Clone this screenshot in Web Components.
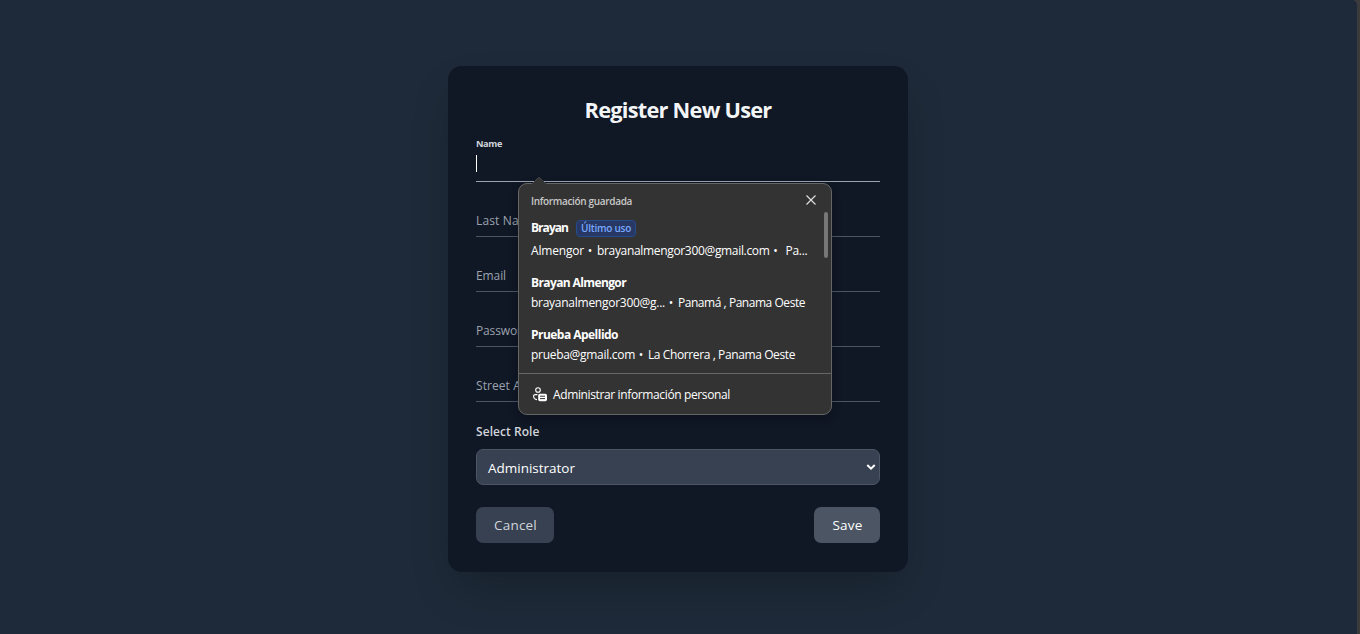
<!DOCTYPE html>
<html lang="es">
<head>
<meta charset="utf-8">
<title>Register New User</title>
<style>
html,body{margin:0;height:100%;overflow:hidden;background:#3b3b3b}
body{font-family:"Open Sans","Noto Sans",sans-serif;color:#fff}
</style>
</head>
<body>
<register-page></register-page>
<script>
const define = (name, html, setup) => customElements.define(name, class extends HTMLElement {
  connectedCallback() {
    if (this.shadowRoot) return;
    const t = document.createElement('template');
    t.innerHTML = html;
    this.attachShadow({mode: 'open'}).append(t.content.cloneNode(true));
    if (setup) setup(this, this.shadowRoot);
  }
});

// A single line of text whose tracking is adjusted to fill the width in "w".
define('fit-text', `<style>
:host{display:inline-block;white-space:pre;flex:none}
span{display:inline-block}
</style><span><slot></slot></span>`, (el, root) => {
  const s = root.querySelector('span'), w = +el.getAttribute('w');
  const nat = s.getBoundingClientRect().width, n = el.textContent.length;
  if (w) { s.style.letterSpacing = ((w - nat) / n) + 'px'; el.style.width = w + 'px'; }
});

define('form-field', `<style>
:host{display:flex;align-items:flex-end;height:54px;border-bottom:1px solid #4b5563;box-sizing:content-box}
:host([active]){border-color:#9ca3af;height:45px;flex-direction:column;align-items:flex-start;justify-content:flex-start}
div{font-size:12px;line-height:18px;height:18px;color:#9ca3af;padding-bottom:6px}
:host([active]) div{font-size:9.2px;font-weight:700;line-height:14px;height:14px;padding:1px 0 0;color:#d1d5db}
i{display:none;width:1px;height:17px;background:#fff;margin-top:4px}
:host([active]) i{display:block}
</style><div><slot></slot></div><i></i>`);

define('role-select', `<style>
:host{display:flex;align-items:center;justify-content:space-between;box-sizing:border-box;height:36px;border:1px solid #4b5563;border-radius:7px;background:#374151;padding:0 3px 0 11px;font-size:13.5px;line-height:20px;color:#fff}
svg{display:block}
div{padding-top:2px}
</style><div><slot></slot></div><svg width="10" height="8" viewBox="0 0 10 8"><path d="M1.3 2 5 5.7 8.7 2" fill="none" stroke="#fff" stroke-width="2"/></svg>`);

define('form-button', `<style>
:host{display:flex;align-items:center;justify-content:center;box-sizing:border-box;height:36px;width:78px;border-radius:7px;background:#374151;color:#d1d5db;font-size:13.5px;line-height:20px;padding-left:1px}
:host([primary]){width:66px;background:#4b5563;color:#fff}
</style><slot></slot>`);

define('saved-entry', `<style>
:host{display:block;height:52px;font-size:12px;line-height:20px;color:#fff}
:host([recent]){height:56px}
.n{display:flex;align-items:center;height:20px;font-weight:700;gap:8px}
:host([recent]) .n{height:22px;margin-bottom:2px}
.d{display:flex;height:20px;font-weight:500}
</style><div class="n"><slot name="name"></slot><slot name="badge"></slot></div><div class="d"><slot></slot></div>`);

define('use-badge', `<style>
:host{display:flex;align-items:center;justify-content:center;box-sizing:border-box;width:60px;height:17px;border:1px solid #264a8d;border-radius:4px;background:#263863;color:#7aa7ff;font-size:10px;line-height:14px;font-weight:600}
</style><slot></slot>`);

define('autofill-popup', `<style>
:host{display:flex;flex-direction:column;box-sizing:border-box;width:314px;height:232px;border:1px solid #666;border-radius:9px;background:#333;box-shadow:0 4px 10px rgba(0,0,0,.25)}
.tip{position:absolute;left:11px;top:-7px}
header{display:flex;justify-content:space-between;align-items:center;height:33px;padding:0 15px 0 12px;color:#c8c8c8;font-size:10px;font-weight:600;line-height:16px;box-sizing:border-box;padding-top:1px}
header svg{margin-top:-2px}
.body{display:flex;justify-content:space-between;height:156px;padding:0 3px 0 12px;box-sizing:border-box}
.bar{width:4px;height:46px;border-radius:2px;background:#777;margin-top:-5px}
footer{display:flex;align-items:center;gap:5px;height:40px;border-top:1px solid #666;padding-left:14px;font-size:12px;font-weight:500;line-height:20px;box-sizing:content-box}
footer fit-text{padding-top:2px}
</style>
<svg class="tip" width="18" height="8" viewBox="0 0 18 8"><path d="M0 8Q2 7 3 6L8 1Q9 .2 10 1L15 6Q16 7 18 8Z" fill="#333"/><path d="M1 7.3Q2 7 3 6L8 1Q9 .2 10 1L15 6Q16 7 17 7.3" fill="none" stroke="#444"/></svg>
<header><fit-text w="101">Información guardada</fit-text><svg width="10" height="10" viewBox="0 0 10 10"><path d="M.5.5l9 9M9.5.5l-9 9" stroke="#e4e4e4" stroke-width="1.1"/></svg></header>
<div class="body"><div>
<saved-entry recent><fit-text slot="name" w="37">Brayan</fit-text><use-badge slot="badge"><fit-text w="50">Último uso</fit-text></use-badge><fit-text w="53">Almengor</fit-text><fit-text w="13"> • </fit-text><fit-text w="172.5">brayanalmengor300@gmail.com</fit-text><fit-text w="16"> •  </fit-text><fit-text w="22">Pa...</fit-text></saved-entry>
<saved-entry><fit-text slot="name" w="95">Brayan Almengor</fit-text><fit-text w="134">brayanalmengor300@g...</fit-text><fit-text w="13"> • </fit-text><fit-text w="127">Panamá , Panama Oeste</fit-text></saved-entry>
<saved-entry><fit-text slot="name" w="87">Prueba Apellido</fit-text><fit-text w="104">prueba@gmail.com</fit-text><fit-text w="13"> • </fit-text><fit-text w="147">La Chorrera , Panama Oeste</fit-text></saved-entry>
</div><div class="bar"></div></div>
<footer><svg width="15" height="15" viewBox="0 0 15 15"><circle cx="5" cy="3" r="2.3" fill="none" stroke="#fff" stroke-width="1.1"/><path d="M4.5 7.6H2.2Q.6 7.6.6 9.2Q.6 12 4 12.6" fill="none" stroke="#fff" stroke-width="1.1"/><rect x="5.2" y="6.7" width="8.8" height="7.6" rx="1.7" fill="#fff"/><path d="M7 9.2h5M7 11.6h5" stroke="#333" stroke-width="1"/></svg><fit-text w="177">Administrar información personal</fit-text></footer>`);

define('register-card', `<style>
:host{display:block;position:relative;box-sizing:border-box;width:460px;height:506px;padding:28px;border-radius:14px;background:#101725;box-shadow:0 22px 45px -11px rgba(0,0,0,.25)}
h1{display:flex;justify-content:center;margin:0 0 6px;font-size:21.8px;line-height:32px;height:36px;font-weight:700;color:#f3f4f6;box-sizing:border-box}
.role{margin:20px 0 8px;height:19px;line-height:19px;font-size:12px;font-weight:600;color:#d1d5db}
.actions{display:flex;justify-content:space-between;margin-top:22px}
autofill-popup{position:absolute;left:70px;top:117px}
</style>
<h1><fit-text w="187">Register New User</fit-text></h1>
<form-field active><fit-text w="26">Name</fit-text></form-field>
<form-field><fit-text w="61">Last Name</fit-text></form-field>
<form-field><fit-text w="30">Email</fit-text></form-field>
<form-field><fit-text w="53">Password</fit-text></form-field>
<form-field><fit-text w="83">Street Address</fit-text></form-field>
<div class="role"><fit-text w="63.5">Select Role</fit-text></div>
<role-select><fit-text w="87">Administrator</fit-text></role-select>
<div class="actions"><form-button><fit-text w="43">Cancel</fit-text></form-button><form-button primary><fit-text w="30">Save</fit-text></form-button></div>
<autofill-popup></autofill-popup>`);

define('register-page', `<style>
:host{display:flex;justify-content:center;box-sizing:border-box;width:1357px;height:634px;padding:66px 1px 0 0;background:#1e2a39;border-radius:0 5px 0 0}
</style><register-card></register-card>`);
</script>
</body>
</html>
